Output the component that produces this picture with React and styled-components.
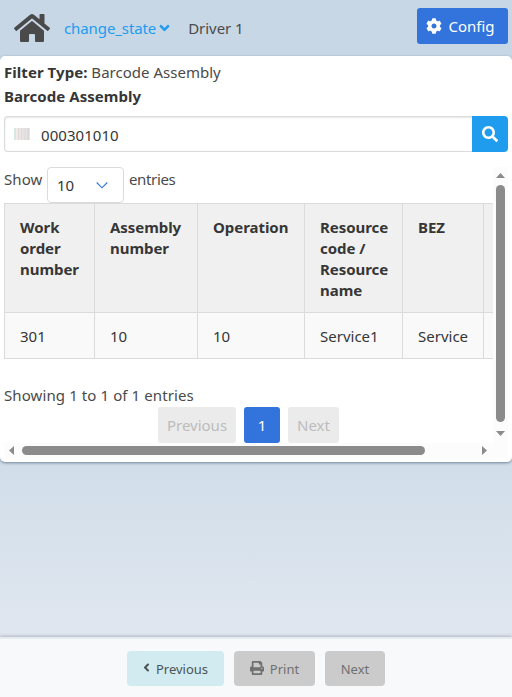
import React from "react";
import styled, { createGlobalStyle } from "styled-components";
import { FaHome, FaAngleDown, FaCog, FaSearch, FaPrint, FaAngleLeft } from "react-icons/fa";

const GlobalStyle = createGlobalStyle`
  *, *::before, *::after { box-sizing: border-box; }
  html, body, #root { height: 100%; }
  body {
    margin: 0;
    overflow: hidden;
    color: #4a4a4a;
    font: 15px/24px "Noto Sans", "Open Sans", sans-serif;
  }
  button, input { font: inherit; color: inherit; }
`;

const Page = styled.div`
  height: 100%;
  display: flex;
  flex-direction: column;
  background: linear-gradient(#c6d7e6, #d1dee9 67%, #e1e7f0 92%);
`;

const Header = styled.header`
  height: 56px;
  flex: none;
  display: flex;
  align-items: center;
  padding: 0 4px 4px 14px;
  background: #c8d7e5;
`;

const HomeIcon = styled(FaHome)`
  width: 36px;
  height: 32px;
  margin-top: 4px;
`;

const StateLink = styled.a`
  display: flex;
  align-items: center;
  margin: 4px 0 0 14px;
  color: #209cee;
  letter-spacing: -0.1px;
  svg { width: 11px; height: 16px; margin-left: 3px; }
`;

const Driver = styled.span`
  margin: 4px 0 0 18px;
  letter-spacing: -0.05px;
`;

const ConfigButton = styled.button`
  width: 91px;
  height: 36px;
  margin-left: auto;
  padding: 0 4px 0 0;
  display: flex;
  align-items: center;
  justify-content: center;
  gap: 6px;
  border: 0;
  border-radius: 3px;
  background: #3273dc;
  color: #fff;
  svg { width: 16px; height: 16px; }
`;

const Card = styled.main`
  height: 406px;
  flex: none;
  padding: 4px 4px 4px;
  border-radius: 5px;
  background: #fff;
  box-shadow: 0 1px 3px rgba(50, 70, 100, 0.6);
`;

const Line = styled.div`
  height: 24px;
  white-space: pre;
  letter-spacing: 0.02px;
`;

const Strong = styled.strong`
  color: #363636;
  font-weight: 700;
  letter-spacing: ${(p) => p.$spacing || "0.05px"};
`;

const Search = styled.div`
  height: 36px;
  margin-top: 8px;
  display: flex;
`;

const Field = styled.label`
  flex: 1;
  display: flex;
  align-items: center;
  gap: 11px;
  padding-left: 9px;
  border: 1px solid #dbdbdb;
  border-right: 0;
  border-radius: 4px 0 0 4px;
  box-shadow: inset 0 1px 2px rgba(10, 10, 10, 0.1);
`;

const Barcode = styled.span`
  width: 16px;
  height: 12px;
  background: linear-gradient(90deg,
    #d6e8e4 0 2px, #f3e9e9 2px 4px, #dadada 4px 5px, #eee4e6 5px 7px,
    #dcdcdc 7px 8px, #e8e2e2 8px 10px, #dedede 10px 12px, #ebe3e3 12px 13px,
    #d9d9d9 13px 15px, #d9ece7 15px);
`;

const BarcodeInput = styled.input`
  flex: 1;
  min-width: 0;
  border: 0;
  padding: 1px 0 0;
  outline: 0;
  background: transparent;
  color: #363636;
  letter-spacing: 0.05px;
`;

const SearchButton = styled.button`
  width: 36px;
  padding: 0;
  border: 0;
  border-radius: 0 4px 4px 0;
  background: #209cee;
  color: #fff;
  display: flex;
  align-items: center;
  justify-content: center;
  svg { width: 16px; height: 16px; margin-top: -1px; }
`;

const ScrollArea = styled.section`
  height: 291px;
  margin-top: 15px;
  display: grid;
  grid-template: 276px 15px / 489px 15px;
  background: #fcfcfc;
`;

const Viewport = styled.div`
  overflow: hidden;
  background: #fff;
`;

const LengthRow = styled.div`
  height: 36px;
  display: flex;
  > span { line-height: 25px; }
  > span:first-child { width: 43px; letter-spacing: 0.1px; }
  > span:last-child { padding-left: 5px; letter-spacing: -0.35px; }
`;

const Select = styled.div`
  width: 77px;
  height: 36px;
  padding: 0 15px 0 9px;
  display: flex;
  align-items: center;
  justify-content: space-between;
  border: 1px solid #dbdbdb;
  border-radius: 4px;
  color: #363636;
`;

const Table = styled.table`
  width: 560px;
  table-layout: fixed;
  border-collapse: separate;
  border-spacing: 0;
  border-bottom: 1px solid #dbdbdb;
  color: #363636;
`;

const Col = styled.col`
  width: ${(p) => p.$w}px;
`;

const cellBase = `
  padding: 0 0 0 15px;
  border: solid #dbdbdb;
  border-width: 1px 0 0 1px;
  text-align: left;
  white-space: pre-line;
`;

const Th = styled.th`
  ${cellBase}
  height: 109px;
  padding-top: 13px;
  vertical-align: top;
  background: #f0f0f0;
  font-weight: 700;
  line-height: 21px;
  letter-spacing: -0.05px;
`;

const Td = styled.td`
  ${cellBase}
  height: 46px;
  padding-top: 0;
  background: #f9f9f9;
`;

const Info = styled.div`
  margin-top: 24px;
  height: 24px;
  letter-spacing: 0.1px;
`;

const Pager = styled.nav`
  display: flex;
  gap: 8px;
  padding-left: 154px;
`;

const PageButton = styled.button`
  width: ${(p) => p.$w}px;
  height: 36px;
  padding: 0;
  border: 0;
  border-radius: 3px;
  background: ${(p) => (p.$current ? "#3273dc" : "#ebebeb")};
  color: ${(p) => (p.$current ? "#fff" : "#bcbcbc")};
`;

const VerticalBar = styled.div`
  display: flex;
  flex-direction: column;
  align-items: center;
  padding: 6px 0 7px;
`;

const HorizontalBar = styled.div`
  display: flex;
  align-items: center;
  padding: 0 6px 0 5px;
`;

const VerticalThumb = styled.div`
  width: 9px;
  flex: 1;
  margin: 7px 0 9px;
  border-radius: 5px;
  background: #8b8b8b;
`;

const HorizontalThumb = styled.div`
  width: 403px;
  height: 9px;
  margin: 0 auto 0 8px;
  border-radius: 5px;
  background: #8b8b8b;
`;

const ArrowSvg = styled.svg`
  display: block;
  fill: #8b8b8b;
`;

const Footer = styled.footer`
  height: 60px;
  margin-top: auto;
  padding-top: 12px;
  display: flex;
  justify-content: center;
  gap: 10px;
  border-top: 2px solid #e6ebf0;
  background: #f8f9fb;
  box-shadow: 0 -1px 3px rgba(60, 70, 80, 0.3);
`;

const FooterButton = styled.button`
  width: ${(p) => p.$w}px;
  height: 35px;
  padding: ${(p) => (p.$active ? "1px 3px 0 0" : "1px 0 0")};
  display: flex;
  align-items: center;
  justify-content: center;
  gap: ${(p) => p.$gap || 6}px;
  border: 0;
  border-radius: 4px;
  background: ${(p) => (p.$active ? "#d1ebf0" : "#cbcbcb")};
  color: ${(p) => (p.$active ? "#4c5356" : "#707070")};
  font-size: 13px;
  svg { margin-top: -3px; }
`;

const columns = [
  { title: "Work\norder\nnumber", width: 90, value: "301" },
  { title: "Assembly\nnumber", width: 103, value: "10" },
  { title: "Operation", width: 107, value: "10" },
  { title: "Resource\ncode /\nResource\nname", width: 98, value: "Service1" },
  { title: "BEZ", width: 81, value: "Service" },
  { title: "", width: 81, value: "" },
];

const Arrow = ({ w, h, points }) => (
  <ArrowSvg width={w} height={h} viewBox={`0 0 ${w} ${h}`}>
    <polygon points={points} />
  </ArrowSvg>
);

export default function App() {
  return (
    <Page>
      <GlobalStyle />
      <Header>
        <HomeIcon />
        <StateLink>change_state<FaAngleDown /></StateLink>
        <Driver>Driver 1</Driver>
        <ConfigButton><FaCog />Config</ConfigButton>
      </Header>
      <Card>
        <Line><Strong>Filter Type:</Strong> Barcode Assembly</Line>
        <Line><Strong>Barcode Assembly</Strong></Line>
        <Search>
          <Field>
            <Barcode />
            <BarcodeInput defaultValue="000301010" />
          </Field>
          <SearchButton aria-label="Search"><FaSearch /></SearchButton>
        </Search>
        <ScrollArea>
          <Viewport>
            <LengthRow>
              <span>Show</span>
              <Select>
                10
                <svg width="12" height="8" viewBox="0 0 12 8" fill="none" stroke="#3273dc" strokeWidth="1.1">
                  <path d="M.7 1.5 6 6.8 11.3 1.5" />
                </svg>
              </Select>
              <span>entries</span>
            </LengthRow>
            <Table>
              <colgroup>{columns.map((c, i) => <Col key={i} $w={c.width} />)}</colgroup>
              <thead><tr>{columns.map((c, i) => <Th key={i}>{c.title}</Th>)}</tr></thead>
              <tbody><tr>{columns.map((c, i) => <Td key={i}>{c.value}</Td>)}</tr></tbody>
            </Table>
            <Info>Showing 1 to 1 of 1 entries</Info>
            <Pager>
              <PageButton $w={78}>Previous</PageButton>
              <PageButton $w={36} $current>1</PageButton>
              <PageButton $w={51}>Next</PageButton>
            </Pager>
          </Viewport>
          <VerticalBar>
            <Arrow w={9} h={5} points="4.5,0 9,5 0,5" />
            <VerticalThumb />
            <Arrow w={9} h={5} points="0,0 9,0 4.5,5" />
          </VerticalBar>
          <HorizontalBar>
            <Arrow w={5} h={9} points="5,0 5,9 0,4.5" />
            <HorizontalThumb />
            <Arrow w={5} h={9} points="0,0 5,4.5 0,9" />
          </HorizontalBar>
        </ScrollArea>
      </Card>
      <Footer>
        <FooterButton $w={97} $active $gap={3}><FaAngleLeft size={13} />Previous</FooterButton>
        <FooterButton $w={81}><FaPrint size={14} />Print</FooterButton>
        <FooterButton $w={60}>Next</FooterButton>
      </Footer>
    </Page>
  );
}
